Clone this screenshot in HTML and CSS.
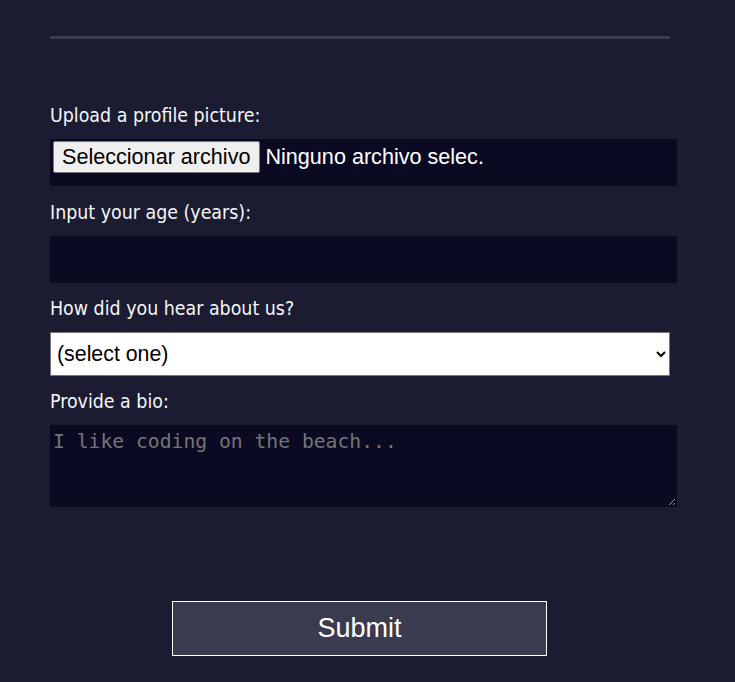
FILE: index.html
```html
<!DOCTYPE html>
<html lang="en">
<head>
<meta charset="utf-8">
<title>Survey Form</title>
<link rel="stylesheet" href="styles.css">
</head>
<body>
<main class="page">
  <div class="divider"></div>
  <form class="form">
    <div class="field">
      <label class="label" for="pic">Upload a profile picture:</label>
      <div class="file-input" id="pic">
        <span class="file-btn">Seleccionar archivo</span>
        <span class="file-name">Ninguno archivo selec.</span>
      </div>
    </div>
    <div class="field">
      <label class="label" for="age">Input your age (years):</label>
      <input class="text-input" id="age" type="number">
    </div>
    <div class="field field-tight">
      <label class="label" for="referrer">How did you hear about us?</label>
      <select class="select" id="referrer">
        <option>(select one)</option>
        <option>freeCodeCamp News</option>
        <option>freeCodeCamp YouTube Channel</option>
        <option>freeCodeCamp Forum</option>
        <option>Other</option>
      </select>
    </div>
    <div class="field field-tight">
      <label class="label" for="bio">Provide a bio:</label>
      <textarea class="textarea" id="bio" placeholder="I like coding on the beach..."></textarea>
    </div>
    <div class="actions">
      <button class="submit" type="button">Submit</button>
    </div>
  </form>
</main>
</body>
</html>
```

FILE: styles.css
```css
html, body {
  margin: 0;
  padding: 0;
}

body {
  background-color: #1b1b32;
  color: #f5f6f7;
  font-family: "DejaVu Sans Condensed", "DejaVu Sans", sans-serif;
  font-size: 19.4px;
  min-height: 682px;
}

.page {
  width: 620px;
  padding-left: 50px;
  padding-top: 36px;
}

.divider {
  height: 3px;
  background-color: #3b3b4f;
}

.form {
  padding-top: 50px;
  display: flex;
  flex-direction: column;
}

.field {
  display: flex;
  flex-direction: column;
  margin-top: 13px;
}

.field-tight {
  margin-top: 12px;
}

.label {
  display: block;
  line-height: 28px;
  height: 24px;
  margin-bottom: 13px;
  white-space: nowrap;
}

.file-input {
  box-sizing: border-box;
  width: 627px;
  height: 47px;
  background-color: #0a0a23;
  border: 1px solid #0a0a23;
  padding: 1px 2px;
  display: flex;
  align-items: flex-start;
  gap: 5px;
  font-family: "Liberation Sans", Arial, sans-serif;
  font-size: 21.6px;
  color: #ffffff;
}

.file-btn {
  box-sizing: border-box;
  height: 32px;
  line-height: 30px;
  padding: 0 9px 0 8px;
  background-color: #efefef;
  border: 1px solid #767676;
  border-radius: 2px;
  color: #000000;
  white-space: nowrap;
}

.file-name {
  line-height: 32px;
  white-space: nowrap;
}

.text-input {
  box-sizing: border-box;
  width: 627px;
  height: 47px;
  margin: 0;
  background-color: #0a0a23;
  border: 1px solid #0a0a23;
  color: #ffffff;
  padding: 1px 2px;
  font-family: "Liberation Sans", Arial, sans-serif;
  font-size: 21.33px;
  outline: none;
}

.select {
  box-sizing: border-box;
  width: 620px;
  height: 44px;
  margin: 0;
  background-color: #ffffff;
  color: #000000;
  border: 1px solid #767676;
  border-radius: 0;
  padding: 0 2px;
  font-family: "Liberation Sans", Arial, sans-serif;
  font-size: 21.33px;
}

.textarea {
  box-sizing: border-box;
  width: 627px;
  height: 82px;
  margin: 0;
  background-color: #0a0a23;
  border: 1px solid #0a0a23;
  color: #ffffff;
  padding: 4px 2px 2px;
  font-family: "DejaVu Sans Mono", "Liberation Mono", monospace;
  font-size: 19.7px;
  line-height: 24px;
  outline: none;
}

.textarea::placeholder {
  color: #757575;
}

.actions {
  display: flex;
  justify-content: center;
  margin-top: 94px;
  padding-right: 1px;
}

.submit {
  box-sizing: border-box;
  width: 375px;
  height: 55px;
  background-color: #3b3b4f;
  border: 1px solid #ffffff;
  color: #ffffff;
  font-family: "Liberation Sans", Arial, sans-serif;
  font-size: 27px;
  padding: 0;
}
```
